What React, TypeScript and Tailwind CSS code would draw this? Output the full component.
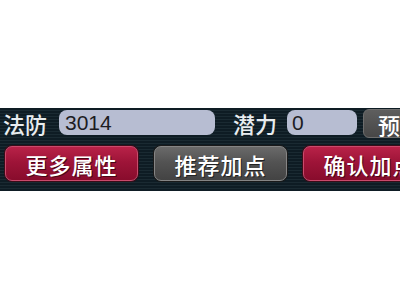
import React from "react";

const font = { fontFamily: '"Noto Sans CJK SC", "Noto Sans", sans-serif' };
const numFont = { fontFamily: '"Liberation Sans", Arial, sans-serif' };

function RedButton({ label }: { label: string }) {
  return (
    <div className="shrink-0 w-[133px] h-[35px] rounded-[7px] border border-[#c94a6c] bg-[linear-gradient(to_bottom,#b82248_0%,#9e1438_45%,#880c2c_100%)] flex items-center justify-center shadow-[0_0_0_1px_#3a0c18]">
      <span className="text-white text-[22px] leading-none font-medium tracking-[1px] [text-shadow:1px_1px_0_#4a0616]">{label}</span>
    </div>
  );
}

function GrayButton({ label }: { label: string }) {
  return (
    <div className="shrink-0 w-[133px] h-[35px] rounded-[7px] border border-[#858585] bg-[linear-gradient(to_bottom,#6a6a6a_0%,#535353_45%,#434343_100%)] flex items-center justify-center shadow-[0_0_0_1px_#1a1a1a]">
      <span className="text-white text-[22px] leading-none font-medium tracking-[1px] [text-shadow:1px_1px_0_#222]">{label}</span>
    </div>
  );
}

export default function App() {
  return (
    <div className="w-[400px] h-[300px] bg-white overflow-hidden" style={font}>
      <div className="mt-[108px] h-[83px] w-[400px] overflow-hidden bg-[image:repeating-linear-gradient(to_bottom,#0e1c24_0px,#0e1c24_2px,#1a2a32_2px,#1a2a32_3px)] flex flex-col">
        <div className="flex items-start h-[30px] pt-[1px]">
          <div className="ml-[3px] mt-[1px] h-[25px] w-[56px] shrink-0 flex items-center">
            <span className="text-[22px] leading-none text-[#e8ecef] font-medium">法防</span>
          </div>
          <div className="mt-[1px] w-[156px] h-[25px] shrink-0 rounded-[8px] bg-[#b7bdd2] flex items-center pl-[6px]">
            <span className="text-[21px] leading-none text-[#1c1c22]" style={numFont}>3014</span>
          </div>
          <div className="ml-[18px] mt-[1px] h-[25px] w-[54px] shrink-0 flex items-center">
            <span className="text-[22px] leading-none text-[#e8ecef] font-medium">潜力</span>
          </div>
          <div className="mt-[1px] w-[70px] h-[25px] shrink-0 rounded-[8px] bg-[#b7bdd2] flex items-center pl-[5px]">
            <span className="text-[21px] leading-none text-[#1c1c22]" style={numFont}>0</span>
          </div>
          <div className="ml-[6px] w-[60px] h-[29px] shrink-0 rounded-[6px] border border-[#6e6e6e] bg-[linear-gradient(to_bottom,#5e5e5e_0%,#474747_100%)] flex items-center pl-[14px]">
            <span className="text-white text-[22px] leading-none font-medium">预览</span>
          </div>
        </div>
        <div className="flex items-start gap-[16px] pl-[5px] mt-[8px]">
          <RedButton label="更多属性" />
          <GrayButton label="推荐加点" />
          <RedButton label="确认加点" />
        </div>
      </div>
    </div>
  );
}
